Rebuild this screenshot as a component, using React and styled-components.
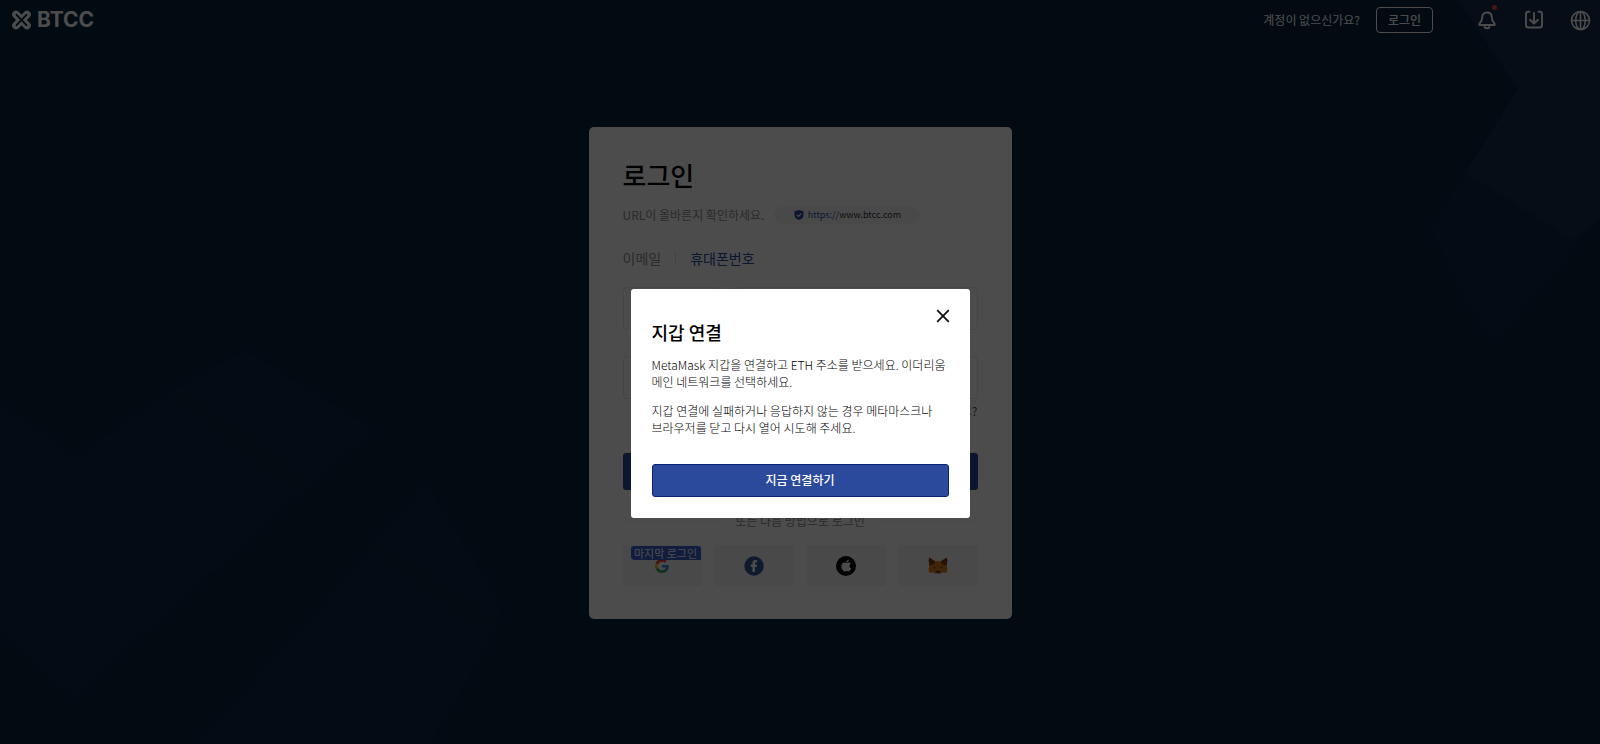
import React from 'react';
import styled, { createGlobalStyle } from 'styled-components';

const GlobalStyle = createGlobalStyle`
  *, *::before, *::after { box-sizing: border-box; }
  html, body, #root { min-height: 100vh; }
  body {
    margin: 0;
    background: #07223e;
    font-family: "Noto Sans CJK KR", "Noto Sans", sans-serif;
    font-size: 12px;
    color: #000;
  }
  button, input, select { font: inherit; }
  h1, h2, p { margin: 0; }
`;

const Page = styled.div`
  position: relative;
  min-height: 100vh;
  display: flex;
  flex-direction: column;
  overflow: hidden;
`;

const Backdrop = styled.svg`
  position: absolute;
  inset: 0;
  width: 100%;
  height: 100%;
`;

const Header = styled.header`
  position: relative;
  display: flex;
  align-items: center;
  height: 40px;
  padding: 0 9px 0 11px;
  color: #fff;
`;

const Logo = styled.a`
  display: flex;
  align-items: center;
  gap: 5px;
  margin-right: auto;
  color: #fff;
  font: 700 21px/24px Inter, sans-serif;
  text-decoration: none;
`;

const SignupHint = styled.span`
  margin-right: 16px;
  padding-bottom: 2px;
  font-size: 12px;
`;

const HeaderButton = styled.button`
  width: 57px;
  height: 26px;
  margin-right: 43px;
  padding: 0;
  border: 1px solid #fff;
  border-radius: 4px;
  background: transparent;
  color: #fff;
  font-weight: 500;
  line-height: 16px;
`;

const HeaderIcons = styled.nav`
  display: flex;
  align-items: center;
  gap: 26px;
`;

const IconButton = styled.button`
  position: relative;
  display: grid;
  width: 21px;
  height: 21px;
  padding: 0;
  place-items: center;
  border: 0;
  background: transparent;
  color: #fff;
`;

const AlertDot = styled.span`
  position: absolute;
  top: -5px;
  right: 0;
  width: 5px;
  height: 5px;
  border-radius: 50%;
  background: #f04838;
`;

const Main = styled.main`
  position: relative;
  display: flex;
  justify-content: center;
  padding: 87px 16px 48px;
`;

const Card = styled.section`
  display: flex;
  flex-direction: column;
  width: 100%;
  max-width: 423px;
  padding: 33px 34px;
  border-radius: 5px;
  background: #fff;
`;

const CardTitle = styled.h1`
  font-size: 26px;
  font-weight: 500;
  line-height: 30px;
`;

const UrlRow = styled.p`
  display: flex;
  align-items: center;
  gap: 10px;
  margin-top: 16px;
  color: #8c8f96;
  line-height: 18px;
`;

const UrlPill = styled.span`
  display: flex;
  align-items: center;
  justify-content: center;
  gap: 4px;
  width: 146px;
  height: 18px;
  border-radius: 9px;
  background: #f5f6f9;
  color: #333;
  font-size: 9px;
`;

const UrlScheme = styled.span`
  color: #2c4a9e;
`;

const Tabs = styled.div`
  display: flex;
  align-items: center;
  margin-top: 24px;
`;

const Tab = styled.button`
  padding: 0;
  border: 0;
  background: transparent;
  color: ${({ $active }) => ($active ? '#2c4a9e' : '#8c8f96')};
  font-size: 14px;
  line-height: 20px;
`;

const TabDivider = styled.span`
  width: 1px;
  height: 14px;
  margin: 0 14px;
  background: #dcdfe6;
`;

const FieldRow = styled.div`
  display: flex;
  gap: 13px;
  margin-top: ${({ $gap }) => $gap}px;
`;

const Field = styled.input`
  flex: 1;
  min-width: 0;
  height: 43px;
  padding: 0 12px;
  border: 1px solid #e6e8ee;
  border-radius: 4px;
  background: #fff;
`;

const CodeSelect = styled.select`
  width: 98px;
  height: 43px;
  padding: 0 8px;
  border: 1px solid #e6e8ee;
  border-radius: 4px;
  background: #fff;
`;

const ForgotLink = styled.a`
  align-self: flex-end;
  margin-top: 3px;
  color: #555;
  line-height: 18px;
  text-decoration: none;
`;

const SubmitButton = styled.button`
  height: 37px;
  margin-top: 33px;
  border: 0;
  border-radius: 3px;
  background: #2c4a9e;
  color: #fff;
`;

const OrRow = styled.div`
  display: flex;
  align-items: center;
  gap: 14px;
  margin-top: 22px;
  color: #8c8f96;
  line-height: 18px;

  &::before, &::after {
    content: "";
    flex: 1;
    height: 1px;
    background: #f2f3f6;
  }
`;

const SocialRow = styled.div`
  display: grid;
  grid-template-columns: repeat(4, 1fr);
  gap: 13px;
  margin-top: 15px;
`;

const SocialButton = styled.button`
  position: relative;
  display: grid;
  height: 41px;
  padding: 0;
  place-items: center;
  border: 0;
  border-radius: 3px;
  background: #f6f6f7;
`;

const LastLogin = styled.span`
  position: absolute;
  top: 1px;
  right: 1px;
  width: 70px;
  height: 14px;
  border-radius: 3px 3px 0 4px;
  background: #3a5fd0;
  color: #fff;
  font-size: 11px;
  line-height: 14px;
  text-align: center;
  white-space: nowrap;
`;

const Overlay = styled.div`
  position: fixed;
  inset: 0;
  display: flex;
  align-items: center;
  justify-content: center;
  padding: 63px 16px 0;
  background: rgba(0, 0, 0, 0.7);
`;

const Dialog = styled.div`
  position: relative;
  display: flex;
  flex-direction: column;
  width: 100%;
  max-width: 339px;
  padding: 30px 21px 21px;
  border-radius: 3px;
  background: #fff;
`;

const CloseButton = styled.button`
  position: absolute;
  top: 17px;
  right: 17px;
  display: grid;
  width: 20px;
  height: 20px;
  padding: 0;
  place-items: center;
  border: 0;
  background: transparent;
  color: #111;
`;

const DialogTitle = styled.h2`
  margin-bottom: 10px;
  font-size: 18px;
  font-weight: 500;
  line-height: 27px;
`;

const DialogText = styled.p`
  margin-bottom: 12px;
  color: #000;
  font-weight: 300;
  line-height: 17px;
  white-space: nowrap;
`;

const ConnectButton = styled.button`
  height: 33px;
  margin-top: 16px;
  padding: 0 0 2px;
  border: 1px solid #0a2472;
  border-radius: 3px;
  background: #2c4a9b;
  color: #fff;
  font-weight: 500;
  line-height: 18px;
`;

const BackgroundShapes = () => (
  <Backdrop viewBox="0 0 1600 744" preserveAspectRatio="xMidYMid slice" aria-hidden="true">
    <path d="M0 404 76 457 165 395 245 350 375 430 310 485 120 655 76 700 0 628Z" fill="#0e2547" />
    <path d="M163 397 190 388 314 474 292 498Z" fill="#0f2840" />
    <path d="M0 602 98 675 76 700 0 628Z" fill="#102748" />
    <path d="M425 483 490 585 502 615 485 650 430 744H198L350 574Z" fill="#0e2547" />
    <path d="M363 550 382 538 500 615 485 644Z" fill="#0f2840" />
    <path d="M1458 0 1518 89 1466 172 1432 228 1460 290 1494 342 1600 220V0Z" fill="#0f2749" />
    <path d="M1458 0 1518 89 1466 172 1572 240 1600 218V0Z" fill="#142c4e" />
  </Backdrop>
);

const LogoMark = () => (
  <svg width="21" height="20" viewBox="0 0 20 20" fill="none" strokeLinecap="round" aria-hidden="true">
    <path d="M4.500 4.500 15.500 15.500M15.500 4.500 4.500 15.500" stroke="#fff" strokeWidth="7.600" />
    <path d="M5 4.800 15 15.200M15 4.800 5 15.200" stroke="#07223e" strokeWidth="1.900" />
  </svg>
);

const BellIcon = () => (
  <svg width="20" height="20" viewBox="0 0 20 20" fill="none" stroke="currentColor" strokeWidth="1.900" strokeLinejoin="round" strokeLinecap="round">
    <path d="M10 2.500C6.900 2.500 5.200 4.700 5.200 7.500 5.200 10.700 4.300 11.900 2.400 13.900 2 14.400 2.200 15 2.900 15H17.100C17.800 15 18 14.400 17.600 13.900 15.700 11.900 14.800 10.700 14.800 7.500 14.800 4.700 13.100 2.500 10 2.500Z" />
    <path d="M7.600 17C8.400 18.800 11.600 18.800 12.400 17" />
  </svg>
);

const DownloadIcon = () => (
  <svg width="20" height="20" viewBox="0 0 20 20" fill="none" stroke="currentColor" strokeWidth="1.900" strokeLinecap="round" strokeLinejoin="round">
    <path d="M5.500 1.800H4.300C2.800 1.800 2 2.600 2 4.100V15.200C2 16.700 2.800 17.500 4.300 17.500H15.700C17.200 17.500 18 16.700 18 15.200V4.100C18 2.600 17.200 1.800 15.700 1.800H14.500" />
    <path d="M10 3V13M6 9.800 10 13.500 14 9.800" />
  </svg>
);

const GlobeIcon = () => (
  <svg width="21" height="21" viewBox="0 0 21 21" fill="none" stroke="currentColor" strokeWidth="1.600">
    <circle cx="10.500" cy="10.500" r="9" />
    <ellipse cx="10.500" cy="10.500" rx="4.800" ry="9" />
    <path d="M10.500 1.500V19.500M1.500 10.500H19.500" />
  </svg>
);

const ShieldIcon = () => (
  <svg width="10" height="10" viewBox="0 0 10 10" aria-hidden="true">
    <path d="M5 0 9.500 1.300V5.200C9.500 7.600 7.700 9.200 5 10 2.300 9.200.5 7.600.5 5.200V1.300Z" fill="#2c4a9e" />
    <path d="M3 4.800 4.500 6.300 7.200 3.600" fill="none" stroke="#fff" strokeWidth="1.200" />
  </svg>
);

const GoogleIcon = () => (
  <svg width="14" height="14" viewBox="0 0 24 24">
    <path fill="#4285f4" d="M23.500 12.300c0-.9-.1-1.500-.2-2.200H12v4.500h6.500c-.1 1.100-.8 2.800-2.400 3.900l3.700 2.900c2.300-2.100 3.700-5.200 3.700-9.100Z" />
    <path fill="#34a853" d="M12 24c3.200 0 6-1.100 7.900-2.900l-3.700-2.900c-1 .7-2.400 1.200-4.200 1.200-3.200 0-5.800-2.100-6.800-5L1.300 17.400C3.300 21.300 7.300 24 12 24Z" />
    <path fill="#fbbc05" d="M5.200 14.400a7.400 7.400 0 0 1 0-4.800L1.300 6.600a12 12 0 0 0 0 10.800Z" />
    <path fill="#ea4335" d="M12 4.700c2.300 0 3.800 1 4.700 1.800L20.100 3.200C18 1.200 15.200 0 12 0 7.300 0 3.300 2.700 1.300 6.600l3.900 3c1-2.800 3.600-4.900 6.800-4.900Z" />
  </svg>
);

const FacebookIcon = () => (
  <svg width="20" height="20" viewBox="0 0 20 20">
    <circle cx="10" cy="10" r="9.700" fill="#34589a" />
    <path d="M8.400 16V10.900H6.800V8.600H8.400V7.200C8.400 5.100 9.500 4.100 11.400 4.100 12 4.100 12.700 4.200 13.100 4.300V6.300H12.100C11.300 6.300 11 6.700 11 7.400V8.600H13L12.700 10.900H11V16Z" fill="#fff" />
  </svg>
);

const AppleIcon = () => (
  <svg width="20" height="20" viewBox="0 0 20 20">
    <circle cx="10" cy="10" r="10" fill="#000" />
    <g transform="translate(2.500 1.800) scale(.65)" fill="#fff">
      <path d="M17.050 20.280c-.98.950-2.050.800-3.080.350-1.090-.460-2.090-.480-3.240 0-1.440.620-2.200.440-3.060-.350C2.790 15.250 3.510 7.590 9.050 7.310c1.350.070 2.290.740 3.080.800 1.180-.240 2.310-.930 3.570-.840 1.510.120 2.650.720 3.400 1.800-3.120 1.870-2.380 5.980.480 7.130-.570 1.500-1.310 2.990-2.540 4.090ZM12.030 7.250c-.150-2.230 1.660-4.070 3.740-4.250.290 2.580-2.340 4.500-3.740 4.250Z" />
    </g>
  </svg>
);

const FoxIcon = () => (
  <svg width="20" height="18" viewBox="0 0 20 18">
    <path d="M1.200.6 7.200 4.200H12.800L18.800.6 19.400 3.600 18.500 8.700 19.500 12.200 18.400 16 14.700 15.200 12.300 17H7.700L5.300 15.200 1.600 16 .5 12.200 1.500 8.700.6 3.600Z" fill="#dd7a1c" />
    <path d="M1.200.6 7.200 4.400 5.600 7.600 1.600 8.700.6 3.600Z" fill="#763e1a" />
    <path d="M18.800.6 12.800 4.400 14.400 7.600 18.400 8.700 19.400 3.600Z" fill="#763e1a" />
    <path d="M5.500 9.500 8 11 5.800 11.300ZM14.500 9.500 12 11 14.200 11.300Z" fill="#6b3515" />
    <path d="M8.300 14.200H11.700L12.300 17H7.700Z" fill="#c0ad9e" />
    <path d="M8.400 14H11.600L11.800 15.500H8.200Z" fill="#161616" />
  </svg>
);

const CloseIcon = () => (
  <svg width="14" height="14" viewBox="0 0 14 14" fill="none" stroke="currentColor" strokeWidth="1.800">
    <path d="M1.200 1.200 12.800 12.800M12.800 1.200 1.200 12.800" />
  </svg>
);

export default function App() {
  return (
    <>
      <GlobalStyle />
      <Page>
        <BackgroundShapes />
        <Header>
          <Logo href="#home"><LogoMark />BTCC</Logo>
          <SignupHint>계정이 없으신가요?</SignupHint>
          <HeaderButton type="button">로그인</HeaderButton>
          <HeaderIcons>
            <IconButton type="button" aria-label="알림"><BellIcon /><AlertDot /></IconButton>
            <IconButton type="button" aria-label="다운로드"><DownloadIcon /></IconButton>
            <IconButton type="button" aria-label="언어"><GlobeIcon /></IconButton>
          </HeaderIcons>
        </Header>
        <Main>
          <Card>
            <CardTitle>로그인</CardTitle>
            <UrlRow>
              URL이 올바른지 확인하세요.
              <UrlPill>
                <ShieldIcon />
                <span><UrlScheme>https://</UrlScheme>www.btcc.com</span>
              </UrlPill>
            </UrlRow>
            <Tabs>
              <Tab type="button">이메일</Tab>
              <TabDivider />
              <Tab type="button" $active>휴대폰번호</Tab>
            </Tabs>
            <FieldRow $gap={19}>
              <CodeSelect aria-label="국가 번호" />
              <Field type="tel" aria-label="휴대폰번호" />
            </FieldRow>
            <FieldRow $gap={26}>
              <Field type="password" aria-label="비밀번호" />
            </FieldRow>
            <ForgotLink href="#forgot">비밀번호를 잊으셨나요?</ForgotLink>
            <SubmitButton type="button" aria-label="로그인" />
            <OrRow>또는 다음 방법으로 로그인</OrRow>
            <SocialRow>
              <SocialButton type="button" aria-label="Google"><GoogleIcon /><LastLogin>마지막 로그인</LastLogin></SocialButton>
              <SocialButton type="button" aria-label="Facebook"><FacebookIcon /></SocialButton>
              <SocialButton type="button" aria-label="Apple"><AppleIcon /></SocialButton>
              <SocialButton type="button" aria-label="MetaMask"><FoxIcon /></SocialButton>
            </SocialRow>
          </Card>
        </Main>
      </Page>
      <Overlay>
        <Dialog role="dialog" aria-modal="true" aria-labelledby="wallet-title">
          <CloseButton type="button" aria-label="닫기"><CloseIcon /></CloseButton>
          <DialogTitle id="wallet-title">지갑 연결</DialogTitle>
          <DialogText>
            MetaMask 지갑을 연결하고 ETH 주소를 받으세요. 이더리움<br />
            메인 네트워크를 선택하세요.
          </DialogText>
          <DialogText>
            지갑 연결에 실패하거나 응답하지 않는 경우 메타마스크나<br />
            브라우저를 닫고 다시 열어 시도해 주세요.
          </DialogText>
          <ConnectButton type="button">지금 연결하기</ConnectButton>
        </Dialog>
      </Overlay>
    </>
  );
}
